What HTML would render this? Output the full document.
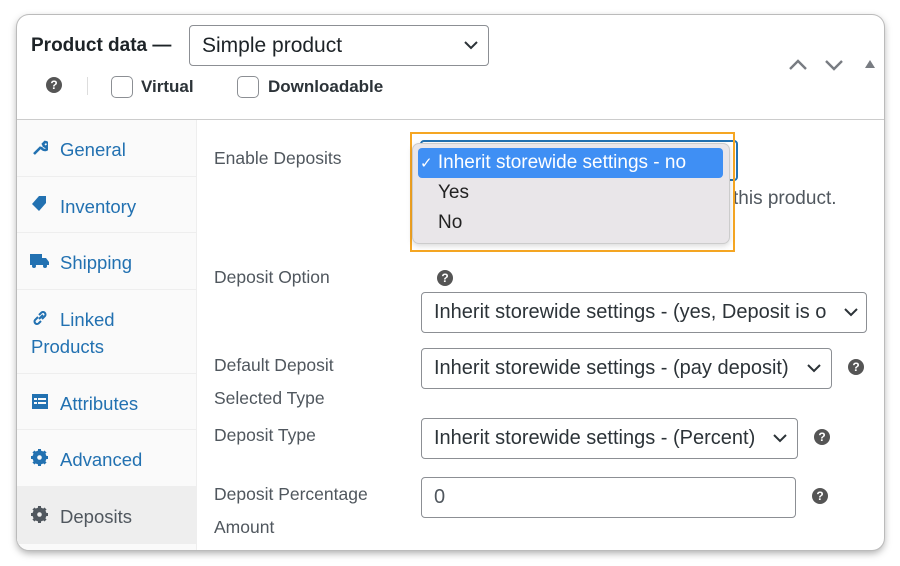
<!DOCTYPE html>
<html><head><meta charset="utf-8"><style>
*{box-sizing:border-box;margin:0;padding:0}
body{width:900px;height:566px;background:#fff;font-family:"Liberation Sans",sans-serif;position:relative;overflow:hidden}
.a{position:absolute}
.card{left:17px;top:15px;width:867px;height:535px;border-radius:12px;background:#fff;box-shadow:0 0 0 1px #bbb,0 3px 8px rgba(0,0,0,.35);overflow:hidden}
.sel{border:1px solid #8c8f94;border-radius:4px;background:#fff;font-size:20px;color:#2c3338;padding-left:12px;display:flex;align-items:center;white-space:nowrap;overflow:hidden}
.chev{position:absolute;right:10px;top:50%;margin-top:-5px;background:#fff}
.help{width:16px;height:16px;border-radius:50%;background:#555;color:#fff;font-size:12px;font-weight:bold;text-align:center;line-height:16px}
.lab{font-size:17.5px;color:#50575e;left:214px;white-space:nowrap}
.nav{left:0;width:180px;border-bottom:1px solid #eee;font-size:18.5px;color:#2271b1}
.nav span{position:absolute;left:43px}
.cb{width:22px;height:22px;border:1px solid #8c8f94;border-radius:5px;background:#fff}
</style></head><body>
<div class="a card">
 <div class="a" style="left:14px;top:20px;font-size:19px;font-weight:bold;color:#1d2327">Product data —</div>
 <div class="a sel" style="left:172px;top:10px;width:300px;height:41px;border-radius:4px;font-size:21px;color:#1d2327">Simple product
  <svg class="chev" width="14" height="9" viewBox="0 0 14 9"><path d="M1 1l6 6 6-6" fill="none" stroke="#2c3338" stroke-width="2"/></svg></div>
 <div class="a help" style="left:29px;top:62px">?</div>
 <div class="a" style="left:70px;top:62px;width:1px;height:18px;background:#ddd"></div>
 <div class="a cb" style="left:94px;top:61px"></div>
 <div class="a" style="left:124px;top:62px;font-size:17px;font-weight:bold;color:#2c3338">Virtual</div>
 <div class="a cb" style="left:220px;top:61px"></div>
 <div class="a" style="left:251px;top:62px;font-size:17px;font-weight:bold;color:#2c3338">Downloadable</div>
 <svg class="a" style="left:771px;top:44px" width="20" height="12" viewBox="0 0 20 12"><path d="M2 10l8-8 8 8" fill="none" stroke="#787c82" stroke-width="2.4"/></svg>
 <svg class="a" style="left:807px;top:44px" width="20" height="12" viewBox="0 0 20 12"><path d="M2 2l8 8 8-8" fill="none" stroke="#787c82" stroke-width="2.4"/></svg>
 <svg class="a" style="left:847px;top:44px" width="12" height="10" viewBox="0 0 12 10"><path d="M6 1l5 8H1z" fill="#787c82"/></svg>
 <div class="a" style="left:0;top:104px;width:867px;height:1px;background:#ccc"></div>
 <div class="a" style="left:0;top:105px;width:180px;height:430px;background:#fafafa;border-right:1px solid #eee"></div>
 <div class="a nav" style="top:105px;height:57px"><svg class="a" style="left:15px;top:20px" width="16" height="16" viewBox="0 0 16 16"><path d="M2 14l7-7M9 7a4 4 0 1 0 4-5l-2 2 1 2 2 1 2-2" fill="none" stroke="#2271b1" stroke-width="2.6"/></svg><span style="top:19px">General</span></div>
 <div class="a nav" style="top:162px;height:56px"><svg class="a" style="left:14px;top:18px" width="17" height="17" viewBox="0 0 17 17"><path d="M8 1h7v7l-7 8-7-7z" fill="#2271b1"/></svg><span style="top:19px">Inventory</span></div>
 <div class="a nav" style="top:218px;height:57px"><svg class="a" style="left:13px;top:20px" width="19" height="16" viewBox="0 0 19 16"><path d="M0 1h12v11H0zM12 5h4l3 4v3h-7z" fill="#2271b1"/><circle cx="4" cy="13" r="2" fill="#2271b1"/><circle cx="15" cy="13" r="2" fill="#2271b1"/></svg><span style="top:19px">Shipping</span></div>
 <div class="a nav" style="top:275px;height:84px"><svg class="a" style="left:15px;top:20px" width="16" height="16" viewBox="0 0 16 16"><path d="M7 9l4-4M6 7L3 10a2.5 2.5 0 0 0 3.5 3.5L9 11M10 9l3-3A2.5 2.5 0 0 0 9.5 2.5L7 5" fill="none" stroke="#2271b1" stroke-width="2"/></svg><span style="top:19px">Linked</span><span style="left:14px;top:46px">Products</span></div>
 <div class="a nav" style="top:359px;height:56px"><svg class="a" style="left:15px;top:20px" width="16" height="15" viewBox="0 0 16 15"><rect x="0" y="0" width="16" height="15" fill="#2271b1"/><rect x="2" y="4" width="3" height="2" fill="#fafafa"/><rect x="6" y="4" width="8" height="2" fill="#fafafa"/><rect x="2" y="8" width="3" height="2" fill="#fafafa"/><rect x="6" y="8" width="8" height="2" fill="#fafafa"/></svg><span style="top:19px">Attributes</span></div>
 <div class="a nav" style="top:415px;height:57px"><svg class="a" style="left:14px;top:19px" width="17" height="17" viewBox="0 0 17 17"><circle cx="8.5" cy="8.5" r="5.5" fill="none" stroke="#2271b1" stroke-width="3"/><path d="M8.5 0v17M0 8.5h17M2.5 2.5l12 12M14.5 2.5l-12 12" stroke="#2271b1" stroke-width="3"/><circle cx="8.5" cy="8.5" r="2.3" fill="#fafafa"/></svg><span style="top:19px">Advanced</span></div>
 <div class="a nav" style="top:472px;height:57px;background:#eee;color:#50575e"><svg class="a" style="left:14px;top:19px" width="17" height="17" viewBox="0 0 17 17"><circle cx="8.5" cy="8.5" r="5.5" fill="none" stroke="#50575e" stroke-width="3"/><path d="M8.5 0v17M0 8.5h17M2.5 2.5l12 12M14.5 2.5l-12 12" stroke="#50575e" stroke-width="3"/><circle cx="8.5" cy="8.5" r="2.3" fill="#eee"/></svg><span style="top:19px">Deposits</span></div>
</div>
<div class="a lab" style="top:148px">Enable Deposits</div>
<div class="a" style="left:733px;top:188px;font-size:19px;color:#50575e">this product.</div>
<div class="a lab" style="top:267px">Deposit Option</div>
<div class="a help" style="left:437px;top:270px">?</div>
<div class="a sel" style="left:421px;top:292px;width:446px;height:41px">Inherit storewide settings - (yes, Deposit is o<svg class="chev" width="24" height="9" viewBox="0 0 24 9" style="right:8px"><path d="M11 1l6 6 6-6" fill="none" stroke="#2c3338" stroke-width="2"/></svg></div>
<div class="a lab" style="top:355px">Default Deposit</div>
<div class="a lab" style="top:388px">Selected Type</div>
<div class="a sel" style="left:421px;top:348px;width:411px;height:41px">Inherit storewide settings - (pay deposit)<svg class="chev" width="14" height="9" viewBox="0 0 14 9"><path d="M1 1l6 6 6-6" fill="none" stroke="#2c3338" stroke-width="2"/></svg></div>
<div class="a help" style="left:848px;top:359px">?</div>
<div class="a lab" style="top:425px">Deposit Type</div>
<div class="a sel" style="left:421px;top:418px;width:377px;height:41px">Inherit storewide settings - (Percent)<svg class="chev" width="14" height="9" viewBox="0 0 14 9"><path d="M1 1l6 6 6-6" fill="none" stroke="#2c3338" stroke-width="2"/></svg></div>
<div class="a help" style="left:814px;top:429px">?</div>
<div class="a lab" style="top:484px">Deposit Percentage</div>
<div class="a lab" style="top:517px">Amount</div>
<div class="a sel" style="left:421px;top:477px;width:375px;height:41px;color:#50575e">0</div>
<div class="a help" style="left:812px;top:488px">?</div>
<div class="a" style="left:420px;top:140px;width:318px;height:41px;border:2px solid #2271b1;border-radius:4px;background:#fff"></div>
<div class="a" style="left:410px;top:132px;width:325px;height:120px;border:2px solid #f5a623"></div>
<div class="a" style="left:412px;top:143px;width:318px;height:101px;background:#e9e6e9;border:1px solid #ccc;border-radius:7px;box-shadow:0 2px 6px rgba(0,0,0,.15)"></div>
<div class="a" style="left:418px;top:148px;width:305px;height:30px;background:#3f8ff4;border-radius:4px;color:#fff;font-size:19px;line-height:30px;padding-left:2px;white-space:nowrap"><span style="font-size:15px">✓</span> Inherit storewide settings - no</div>
<div class="a" style="left:438px;top:182px;font-size:19px;color:#222">Yes</div>
<div class="a" style="left:438px;top:212px;font-size:19px;color:#222">No</div>
</body></html>
